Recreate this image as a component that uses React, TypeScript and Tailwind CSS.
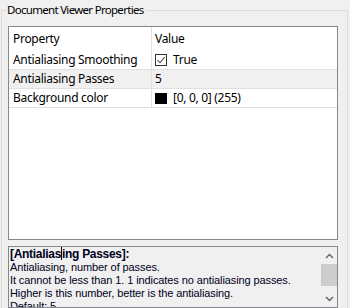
import React from "react";

type Row = { name: string; value: React.ReactNode; selected?: boolean };

const ui = "font-['Noto_Sans',sans-serif] text-[12px] tracking-[-0.3px]";

function CheckBox() {
  return (
    <span className="inline-flex h-[12px] w-[12px] items-center justify-center border border-[#333333] bg-white">
      <svg width="10" height="10" viewBox="0 0 10 10">
        <path d="M1.5 5.2 L4 7.6 L8.6 2.2" fill="none" stroke="#5a5a5a" strokeWidth="1.1" />
      </svg>
    </span>
  );
}

const rows: Row[] = [
  {
    name: "Antialiasing Smoothing",
    value: (
      <span className="flex items-center gap-[6px]">
        <CheckBox />
        True
      </span>
    ),
  },
  { name: "Antialiasing Passes", value: "5", selected: true },
  {
    name: "Background color",
    value: (
      <span className="flex items-center gap-[6px]">
        <span className="h-[11px] w-[12px] bg-black" />
        [0, 0, 0] (255)
      </span>
    ),
  },
];

function Chevron({ up }: { up?: boolean }) {
  return (
    <svg width="9" height="6" viewBox="0 0 9 6">
      <path
        d={up ? "M1 5 L4.5 1.5 L8 5" : "M1 1 L4.5 4.5 L8 1"}
        fill="none"
        stroke="#606060"
        strokeWidth="1.4"
      />
    </svg>
  );
}

export default function App() {
  return (
    <div className={`h-[308px] w-[350px] overflow-hidden bg-[#f0f0f0] text-black ${ui}`}>
      <fieldset className="ml-px h-[320px] w-[347px] border border-[#dcdcdc] pl-[6px] pt-[6px]">
        <legend className="-ml-[2px] pl-px pr-[2px] text-[11.5px] leading-[20px] tracking-[-0.7px]">
          Document Viewer Properties
        </legend>

        <div className="flex h-[214px] w-[330px] flex-col border border-[#828790] bg-white">
          <div className="flex h-[24px] shrink-0 items-center">
            <div className="flex h-full w-[143px] items-center border-r border-[#e0e0e0] pl-[4px]">Property</div>
            <div className="pl-[3px]">Value</div>
          </div>
          {rows.map((row) => (
            <div
              key={row.name}
              className={`flex h-[19px] shrink-0 border-b border-[#e0e0e0] ${row.selected ? "bg-[#f0f0f0]" : "bg-white"}`}
            >
              <div className="flex h-full w-[143px] items-center border-r border-[#e0e0e0] pl-[4px]">{row.name}</div>
              <div className="flex items-center pl-[3px]">{row.value}</div>
            </div>
          ))}
        </div>

        <div className="mt-[6px] flex h-[62px] w-[330px] border border-[#828790] bg-[#f0f0f0]">
          <div className="flex-1 overflow-hidden pl-px font-['Liberation_Sans',sans-serif] text-[11px] leading-[13px] tracking-[-0.1px] text-[#000020]">
            <div className="text-[12px] font-bold tracking-[-0.3px]">
              [Antialias
              <span className="inline-block h-[13px] w-px bg-black align-[-2px]" />
              ing Passes]:
            </div>
            <div>Antialiasing, number of passes.</div>
            <div>It cannot be less than 1. 1 indicates no antialiasing passes.</div>
            <div>Higher is this number, better is the antialiasing.</div>
            <div>Default: 5</div>
          </div>
          <div className="flex w-[16px] flex-col">
            <div className="flex h-[17px] items-center justify-center">
              <Chevron up />
            </div>
            <div className="h-[22px] bg-[#cdcdcd]" />
            <div className="flex-1" />
            <div className="flex h-[17px] items-center justify-center">
              <Chevron />
            </div>
          </div>
        </div>
      </fieldset>
    </div>
  );
}
